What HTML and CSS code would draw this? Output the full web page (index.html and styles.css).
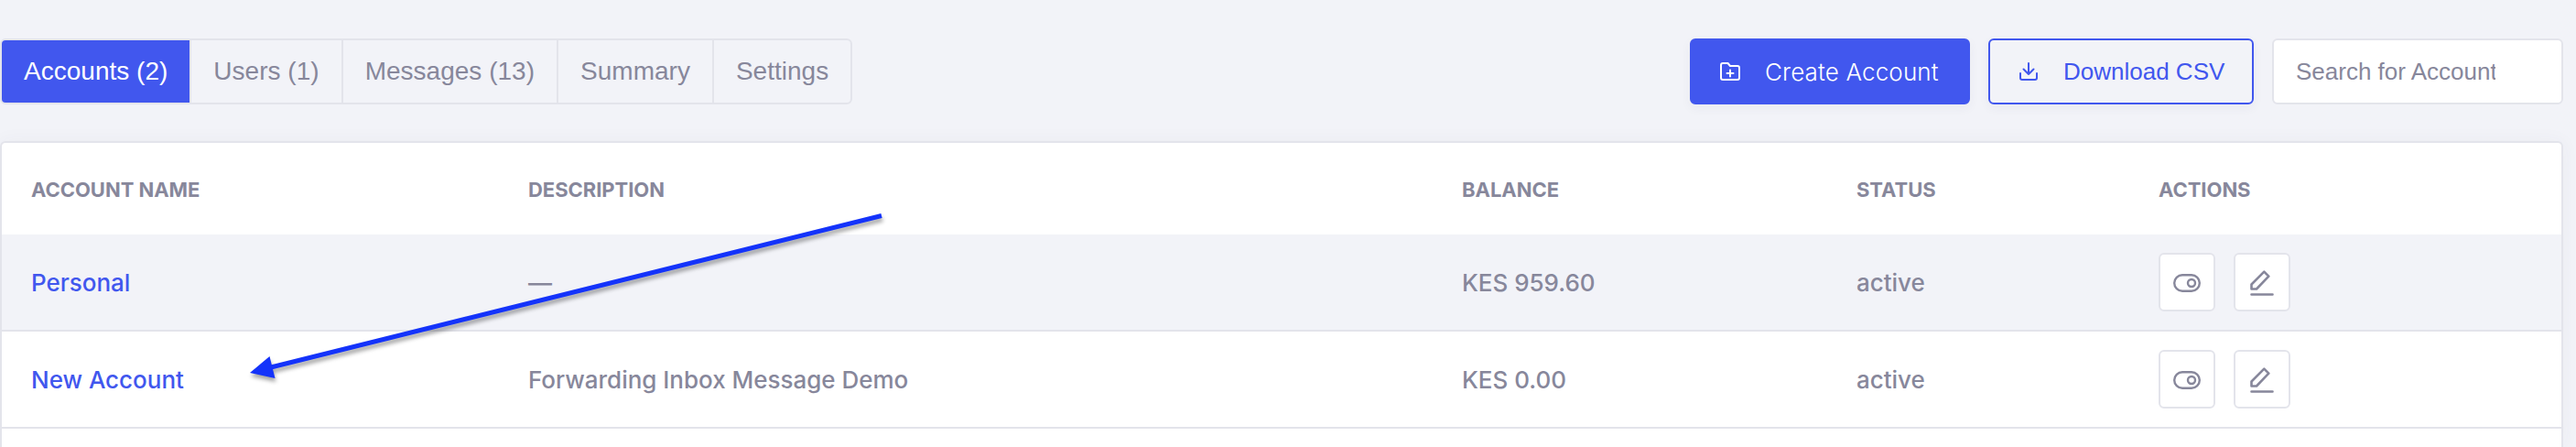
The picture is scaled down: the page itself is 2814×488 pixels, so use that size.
FILE: index.html
```html
<!DOCTYPE html>
<html lang="en">
<head>
<meta charset="utf-8">
<title>Accounts</title>
<link rel="stylesheet" href="styles.css">
</head>
<body>
<svg class="symbols" width="0" height="0">
  <symbol id="toggle" viewBox="0 0 30 20"><rect x="1.2" y="1.2" width="27.6" height="17.6" rx="8.8"/><circle cx="20" cy="10" r="4"/></symbol>
  <symbol id="pen" viewBox="0 0 26 28"><path d="M1.5 20.5v-5L15.3 1.7l5 5L7 20.5zM1.5 26.5h23"/></symbol>
</svg>
<header class="toolbar">
  <nav class="tabs">
    <a class="tab active">Accounts (2)</a>
    <a class="tab">Users (1)</a>
    <a class="tab">Messages (13)</a>
    <a class="tab">Summary</a>
    <a class="tab">Settings</a>
  </nav>
  <div class="tools">
    <button class="btn create"><svg class="folder" viewBox="0 0 22 20"><path d="M1 3a2 2 0 0 1 2-2h5.500L11 4h8a2 2 0 0 1 2 2v11a2 2 0 0 1-2 2H3a2 2 0 0 1-2-2zM11 8.500v7M7.500 12h7"/></svg><span>Create Account</span></button>
    <button class="btn download"><svg class="down" viewBox="0 0 20 20"><path d="M10 1v12M4.500 7.500L10 13l5.500-5.500M1 12v5a2 2 0 0 0 2 2h14a2 2 0 0 0 2-2v-5"/></svg><span>Download CSV</span></button>
    <div class="search"><span>Search for Account</span></div>
  </div>
</header>
<main class="table">
  <div class="row head"><span>ACCOUNT NAME</span><span>DESCRIPTION</span><span>BALANCE</span><span>STATUS</span><span>ACTIONS</span></div>
  <div class="row shaded">
    <a class="name">Personal</a><span>—</span><span>KES 959.60</span><span>active</span>
    <div class="actions"><button class="icon"><svg class="toggle"><use href="#toggle"/></svg></button><button class="icon"><svg class="pen"><use href="#pen"/></svg></button></div>
  </div>
  <div class="row">
    <a class="name">New Account</a><span>Forwarding Inbox Message Demo</span><span>KES 0.00</span><span>active</span>
    <div class="actions"><button class="icon"><svg class="toggle"><use href="#toggle"/></svg></button><button class="icon"><svg class="pen"><use href="#pen"/></svg></button></div>
  </div>
</main>
<svg class="arrow" width="730" height="200" viewBox="260 220 730 200"><path class="shaft" d="M963 235.500L294 401.500"/><path class="tip" d="M273 407l21.500-18 6 24z"/></svg>
</body>
</html>
```
FILE: styles.css
```css
* { box-sizing: border-box; }
body { margin: 0; height: 488px; overflow: hidden; background: #f2f3f8; color: #87879b; font-family: Inter, sans-serif; }
.symbols { position: absolute; }
svg { fill: none; stroke: currentColor; stroke-width: 2; stroke-linecap: round; stroke-linejoin: round; }
button { margin: 0; padding: 0; font: inherit; color: inherit; }

.toolbar { display: flex; justify-content: space-between; width: 2800px; padding: 42px 0 40px; }
.tabs { display: flex; height: 72px; border: 2px solid #e3e4eb; border-radius: 6px; overflow: hidden; font: 28px/68px "Liberation Sans", sans-serif; letter-spacing: .015px; }
.tab { padding: 0 24px; border-right: 2px solid #e3e4eb; }
.tab:last-child { border-right: 0; }
.tab.active { color: #fff; background: #4157ee; }

.tools { display: flex; gap: 20px; }
.btn { display: flex; align-items: center; height: 72px; border: 2px solid #4157ee; border-radius: 6px; font-size: 26px; box-shadow: 0 4px 12px rgba(60, 60, 100, .05); }
.create { width: 306px; padding-left: 31px; background: #4157ee; color: #fff; font-weight: 350; letter-spacing: .15px; }
.download { width: 290px; padding-left: 32px; background: transparent; color: #4157ee; font-family: "Liberation Sans", sans-serif; }
.folder { width: 22px; height: 20px; margin-right: 27px; }
.down { width: 20px; height: 20px; margin-right: 28px; }
.search { width: 318px; height: 72px; padding: 0 24px; border: 2px solid #e3e4eb; border-radius: 6px; background: #fff; font: 26px/68px "Liberation Sans", sans-serif; }
.search span { display: block; width: 218px; overflow: hidden; white-space: nowrap; }

.table { width: 2800px; height: 334px; border: 2px solid #e3e4eb; border-bottom: 0; border-radius: 6px 6px 0 0; background: #fff; box-shadow: 0 0 20px rgba(60, 60, 100, .045); }
.row { display: grid; grid-template-columns: 543px 1020px 431px 330px 1fr; align-items: center; height: 106px; padding-left: 32px; border-bottom: 2px solid #e3e4eb; font-size: 26px; font-weight: 480; letter-spacing: -.02px; white-space: nowrap; }
.head { height: 100px; padding-top: 2px; border: 0; font-size: 22px; font-weight: 700; letter-spacing: -.04px; }
.shaded { background: #f2f3f8; }
.name { color: #4157ee; }
.actions { display: flex; gap: 20px; }
.icon { display: flex; align-items: center; justify-content: center; width: 62px; height: 64px; border: 2px solid #e3e4eb; border-radius: 6px; background: #fff; }
.toggle { width: 30px; height: 20px; margin-top: 2px; stroke-width: 2.400; }
.pen { width: 26px; height: 28px; margin-top: 2px; stroke-width: 2.600; }

.arrow { position: absolute; left: 260px; top: 220px; filter: drop-shadow(1px 4px 2px rgba(0, 0, 0, .35)); }
.shaft { stroke: #1433fa; stroke-width: 5; stroke-linecap: butt; }
.tip { fill: #1433fa; stroke: none; }
```
